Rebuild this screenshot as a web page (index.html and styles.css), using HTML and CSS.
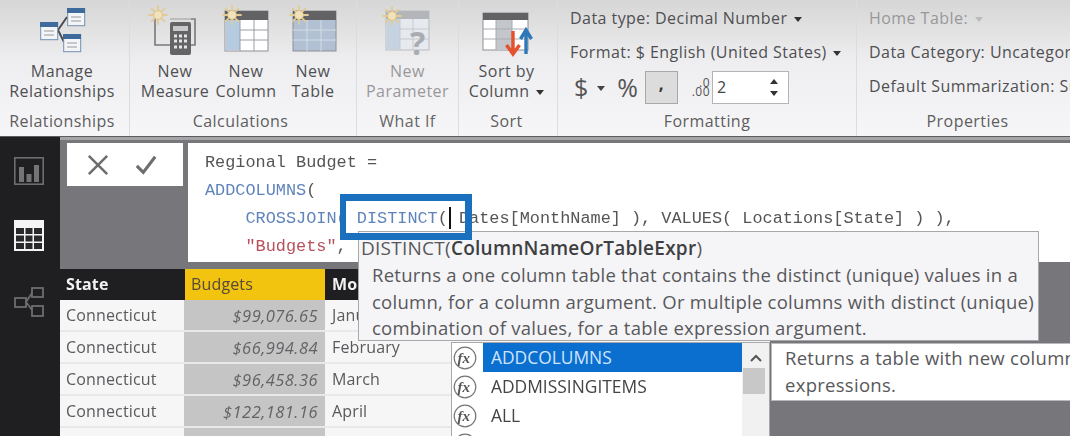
FILE: index.html
```html
<!DOCTYPE html>
<html lang="en">
<head>
<meta charset="utf-8">
<title>Regional Budget</title>
<link rel="stylesheet" href="styles.css">
</head>
<body>
<svg class="defs" width="0" height="0" aria-hidden="true">
  <symbol id="sun" viewBox="-10 -10 20 20">
    <g stroke="#e2cb94" stroke-width="1.8" stroke-linecap="round">
      <path d="M0-9V9M-9 0H9M-6.4-6.4 6.4 6.4M-6.4 6.4 6.4-6.4"/>
    </g>
    <circle r="4.4" fill="#f1e2bb" stroke="#dcc283"/>
  </symbol>
  <symbol id="fx" viewBox="0 0 24 24">
    <circle cx="12" cy="12" r="10.8" fill="#fff" stroke="#777" stroke-width="1.2"/>
    <text x="4.6" y="17" class="fx-text">fx</text>
  </symbol>
</svg>
<div class="app">
  <header class="ribbon">
    <section class="group g-rel">
      <div class="group-body">
        <div class="btn w-full">
          <svg class="ico" viewBox="0 0 50 56">
            <path d="M18 27 27 14M18 27 24 39" stroke="#4c4c50" stroke-width="2" fill="none"/>
            <rect x=".7" y="19.7" width="17" height="17" fill="#f3f5f8" stroke="#6f8fb4"/><rect y="19" width="18" height="5" fill="#3f6a9c"/><path d="M4 28H14M4 32H14" stroke="#999"/>
            <rect x="27.7" y="5.7" width="17" height="17" fill="#f3f5f8" stroke="#6f8fb4"/><rect x="27" y="5" width="18" height="5" fill="#3f6a9c"/><path d="M31 14H41M31 18H41" stroke="#999"/>
            <rect x="23.7" y="31.7" width="17" height="17" fill="#f3f5f8" stroke="#6f8fb4"/><rect x="23" y="31" width="18" height="5" fill="#3f6a9c"/><path d="M27 40H37M27 44H37" stroke="#999"/>
          </svg>
          <span class="btn-label">Manage<br>Relationships</span>
        </div>
      </div>
      <div class="group-label">Relationships</div>
    </section>
    <section class="group g-calc">
      <div class="group-body">
        <div class="btn w-measure">
          <svg class="ico" viewBox="0 0 50 56">
            <path d="M5 16V42H20M41 16H45V42H41" fill="none" stroke="#77787c" stroke-width="1.6"/>
            <path d="M20 16H45" fill="none" stroke="#9a9a9c" stroke-width="1"/>
            <rect x="20" y="19" width="21" height="33" rx="2" fill="#646467"/>
            <rect x="23" y="23" width="15" height="5" fill="#c9c9cb"/>
            <path d="M24 33h3M29 33h3M34 33h3M24 38h3M29 38h3M34 38h3M24 44h3M29 44h3M34 44h3" stroke="#e4e4e4" stroke-width="3"/>
            <use href="#sun" x="-2" y="2" width="20" height="20"/>
          </svg>
          <span class="btn-label">New<br>Measure</span>
        </div>
        <div class="btn w-column">
          <svg class="ico" viewBox="0 0 50 56">
            <rect x="4" y="8" width="43" height="40" fill="#fff" stroke="#8b8f96"/>
            <rect x="4" y="8" width="43" height="9" fill="#626264"/>
            <rect x="5" y="17" width="14" height="30" fill="#b6cbe0"/>
            <path d="M19 17V48M33 17V48M19 27H47M19 37H47" stroke="#9a9ea4"/>
            <use href="#sun" x="1" y="2" width="20" height="20"/>
          </svg>
          <span class="btn-label">New<br>Column</span>
        </div>
        <div class="btn w-table">
          <svg class="ico" viewBox="0 0 50 56">
            <rect x="5" y="8" width="43" height="40" fill="#b1c0d2" stroke="#8b8f96"/>
            <rect x="5" y="8" width="43" height="9" fill="#626264"/>
            <path d="M19 17V48M33 17V48M5 27H48M5 37H48" stroke="#d5dde6"/>
            <use href="#sun" x="1" y="2" width="20" height="20"/>
          </svg>
          <span class="btn-label">New<br>Table</span>
        </div>
      </div>
      <div class="group-label">Calculations</div>
    </section>
    <section class="group g-what">
      <div class="group-body">
        <div class="btn w-full is-off">
          <svg class="ico" viewBox="0 0 50 56">
            <rect x="3" y="8" width="43" height="39" fill="#e6e9ee" stroke="#b9bdc3"/>
            <rect x="3" y="8" width="43" height="8" fill="#b4b5b8"/>
            <rect x="4" y="16" width="13" height="30" fill="#c5d2e0"/>
            <path d="M17 16V47M30 16V47M17 26H46M17 36H46" stroke="#c6c9ce"/>
            <use href="#sun" x="-1" y="3" width="20" height="20"/>
            <text x="27" y="52" class="q-text">?</text>
          </svg>
          <span class="btn-label">New<br>Parameter</span>
        </div>
      </div>
      <div class="group-label">What If</div>
    </section>
    <section class="group g-sort">
      <div class="group-body">
        <div class="btn w-full">
          <svg class="ico" viewBox="0 0 50 56">
            <rect x="1" y="10" width="45" height="37" fill="#fff" stroke="#8b8f96"/>
            <rect x="1" y="10" width="45" height="7" fill="#626264"/>
            <rect x="14" y="17" width="16" height="30" fill="#c3c6ca"/>
            <path d="M14 17V47M30 17V47M1 26H46M1 36H46" stroke="#a9acb1"/>
            <path d="M31 28V48M24.5 42 31 51l6.5-9" fill="none" stroke="#e5512d" stroke-width="3.4"/>
            <path d="M44 51V30M38.5 36 44 27l5.500 9" fill="none" stroke="#2f78b7" stroke-width="3.400"/>
          </svg>
          <span class="btn-label">Sort by<br>Column <i class="caret"></i></span>
        </div>
      </div>
      <div class="group-label">Sort</div>
    </section>
    <section class="group g-format">
      <div class="group-body stack">
        <div class="prop">Data type: Decimal Number <i class="caret"></i></div>
        <div class="prop">Format: $ English (United States) <i class="caret"></i></div>
        <div class="tools">
          <span class="sym">$</span><i class="caret sym-caret"></i>
          <span class="sym pct">%</span>
          <span class="comma">,</span>
          <span class="dec"><span>.0</span><span>.00</span></span>
          <span class="spin"><span>2</span><span class="arrows"><i class="up"></i><i class="down"></i></span></span>
        </div>
      </div>
      <div class="group-label">Formatting</div>
    </section>
    <section class="group g-props">
      <div class="group-body stack">
        <div class="prop is-off">Home Table: <i class="caret pale"></i></div>
        <div class="prop">Data Category: Uncategorized</div>
        <div class="prop">Default Summarization: Sum</div>
      </div>
      <div class="group-label">Properties</div>
    </section>
  </header>

  <div class="main">
    <nav class="rail">
      <svg class="rail-ico" viewBox="0 0 30 28"><rect x=".8" y=".8" width="28.400" height="26.400" fill="none" stroke="#6d6d6f" stroke-width="1.600"/><path d="M5 10h5v15H5zM12.500 17h5v8h-5zM20 8h5v17h-5z" fill="#747476"/></svg>
      <svg class="rail-ico data" viewBox="0 0 30 31"><rect width="30" height="31" fill="#f4f4f4"/><path d="M2 8h8v6H2zM11.500 8h7v6h-7zM20 8h8v6h-8zM2 15.500h8v6H2zM11.500 15.500h7v6h-7zM20 15.500h8v6h-8zM2 23h8v6H2zM11.500 23h7v6h-7zM20 23h8v6h-8z" fill="#29282a"/></svg>
      <svg class="rail-ico rel" viewBox="0 0 30 30"><g fill="none" stroke="#6d6d6f" stroke-width="1.800"><rect x="1" y="11" width="11" height="9"/><rect x="18" y="1" width="11" height="9"/><rect x="18" y="19" width="11" height="10"/><path d="M12 15 18 6M12 15l6 8"/></g></svg>
    </nav>
    <div class="content">
      <div class="formula-row">
        <div class="commit">
          <svg class="x" viewBox="0 0 24 24"><path d="M2 2 22 22M22 2 2 22" stroke="#6e6e70" stroke-width="2.800" fill="none"/></svg>
          <svg class="ok" viewBox="0 0 24 24"><path d="M2 13 9 20 22 3" stroke="#6e6e70" stroke-width="3.400" fill="none"/></svg>
        </div>
        <div class="code">
          <div class="ln">Regional Budget =</div>
          <div class="ln"><span class="fn">ADDCOLUMNS</span>(</div>
          <div class="ln">    <span class="fn">CROSSJOIN</span>( <span class="fn">DISTINCT</span>(<i class="cursor"></i> Dates[MonthName] ), VALUES( Locations[State] ) ),</div>
          <div class="ln">    <span class="str">"Budgets"</span>,</div>
        </div>
      </div>
      <div class="table">
        <div class="row head"><div class="c">State</div><div class="c hl">Budgets</div><div class="c">Month</div></div>
        <div class="row"><div class="c">Connecticut</div><div class="c num">$99,076.65</div><div class="c">January</div></div>
        <div class="row"><div class="c">Connecticut</div><div class="c num">$66,994.84</div><div class="c">February</div></div>
        <div class="row"><div class="c">Connecticut</div><div class="c num">$96,458.36</div><div class="c">March</div></div>
        <div class="row"><div class="c">Connecticut</div><div class="c num">$122,181.16</div><div class="c">April</div></div>
        <div class="row"><div class="c"></div><div class="c num"></div><div class="c"></div></div>
      </div>
    </div>
  </div>

  <aside class="tip">
    <div class="tip-head">DISTINCT(<b>ColumnNameOrTableExpr</b>)</div>
    <div class="tip-body">
      <div>Returns a one column table that contains the distinct (unique) values in a</div>
      <div>column, for a column argument. Or multiple columns with distinct (unique)</div>
      <div>combination of values, for a table expression argument.</div>
    </div>
  </aside>
  <div class="focus-box"></div>
  <div class="ac">
    <ul class="ac-list">
      <li class="sel"><svg class="fx"><use href="#fx"/></svg><span>ADDCOLUMNS</span></li>
      <li><svg class="fx"><use href="#fx"/></svg><span>ADDMISSINGITEMS</span></li>
      <li><svg class="fx"><use href="#fx"/></svg><span>ALL</span></li>
      <li><svg class="fx"><use href="#fx"/></svg><span></span></li>
    </ul>
    <div class="ac-scroll"><svg class="ac-up" viewBox="0 0 12 8"><path d="M1 7 6 2l5 5" fill="none" stroke="#555" stroke-width="2"/></svg><div class="thumb"></div></div>
  </div>
  <div class="ac-desc">Returns a table with new columns specified by the DAX<br>expressions.</div>
</div>
</body>
</html>
```

FILE: styles.css
```css
* { box-sizing: border-box; }
html, body { margin: 0; padding: 0; }
body { width: 1070px; height: 436px; overflow: hidden; background: #77767a; font-family: "Open Sans", "Noto Sans", sans-serif; }
.defs { position: absolute; }
.fx-text { font: italic 700 15px "Liberation Serif", serif; fill: #555; }
.q-text { font: 700 32px "Open Sans", sans-serif; fill: #a9acb1; }

.app { position: relative; width: 1070px; height: 436px; overflow: hidden; display: flex; flex-direction: column; filter: blur(.45px); }

/* ribbon */
.ribbon { flex: none; height: 137px; display: flex; overflow: hidden; background: linear-gradient(#d6d6d6, #eeeef0 45%, #f6f6f8); color: #4f4f52; font-size: 16px; letter-spacing: .45px; border-bottom: 1px solid #5c5c5e; }
.group { flex: none; display: flex; flex-direction: column; height: 136px; border-right: 1px solid #dcdcde; }
.group-body { flex: 1; display: flex; min-height: 0; }
.group-label { height: 25px; padding-bottom: 4px; text-align: center; line-height: 21px; color: #5d5d60; white-space: nowrap; }
.g-rel { width: 130px; padding-right: 5px; }
.g-rel .ico { margin-left: 5px; }
.g-calc { width: 227px; padding-left: 9px; }
.g-calc .group-label { margin-right: 14px; }
.g-what { width: 102px; }
.g-sort { width: 99px; padding-right: 3px; }
.g-format { width: 299px; }
.g-props { width: 213px; border-right: 0; }
.g-props .group-label { padding-left: 8px; }
.btn { display: flex; flex-direction: column; align-items: center; text-align: center; }
.w-full { width: 100%; }
.w-measure { width: 72px; }
.w-column { width: 70px; }
.w-table { width: 64px; }
.ico { width: 50px; height: 56px; margin-top: 3px; flex: none; overflow: visible; }
.btn-label { margin-top: 2px; line-height: 20px; white-space: nowrap; }
.is-off { color: #98989b; }
.g-what .group-label { color: #666; }
.caret { display: inline-block; width: 0; height: 0; margin: 0 0 2px 2px; border: 4px solid transparent; border-top: 5px solid #333; border-bottom: 0; }
.caret.pale { border-top-color: #bbb; }
.stack { flex-direction: column; padding: 1px 0 0 12px; }
.prop { height: 34px; line-height: 34px; white-space: nowrap; }
.tools { height: 36px; display: flex; align-items: center; }
.sym { font-size: 25px; line-height: 34px; color: #555; margin-left: 4px; font-weight: 400; letter-spacing: 0; }
.sym-caret { margin: 2px 0 0 9px; border-top-color: #444; }
.pct { margin-left: 12px; }
.comma { width: 33px; height: 33px; margin-left: 7px; background: #dcdcdc; border: 1px solid #a8a8a8; text-align: center; font-size: 17px; line-height: 24px; font-weight: 700; color: #333; }
.dec { width: 34px; display: flex; flex-direction: column; align-items: flex-end; padding-right: 2px; font-size: 12px; line-height: 9px; color: #555; }
.spin { width: 77px; height: 33px; display: flex; align-items: center; justify-content: space-between; padding: 0 10px 0 4px; background: #fff; border: 1px solid #b4b4b4; font-size: 16px; color: #444; }
.arrows { display: flex; flex-direction: column; gap: 7px; }
.arrows i { display: block; width: 0; height: 0; border: 4px solid transparent; border-bottom: 0; border-top: 5px solid #333; }
.arrows .up { border-top: 0; border-bottom: 5px solid #333; }

/* main */
.main { flex: 1; display: flex; min-height: 0; }
.rail { flex: none; width: 60px; padding: 20px 0 0 14px; background: #1f1e20; display: flex; flex-direction: column; }
.rail-ico { width: 30px; height: 28px; flex: none; }
.rail-ico.data { height: 31px; margin-top: 35px; }
.rail-ico.rel { height: 30px; margin-top: 36px; }
.content { flex: 1; min-width: 0; display: flex; flex-direction: column; border-top: 3px solid #a5a5a7; }
.formula-row { flex: none; height: 129px; padding: 3px 0 0 7px; display: flex; align-items: flex-start; gap: 5px; }
.commit { width: 116px; height: 43px; flex: none; background: #fff; display: flex; align-items: center; padding-left: 20px; }
.x { width: 22px; height: 22px; }
.ok { width: 24px; height: 22px; margin-left: 25px; }
.code { flex: 1; height: 119px; background: #fff; padding: 6px 0 0 17px; font: 16.880px/28px "Liberation Mono", monospace; color: #555; overflow: hidden; }
.ln { height: 28px; white-space: pre; }
.fn { color: #5f83bb; }
.str { color: #b8505c; }
.cursor { display: inline-block; width: 0; height: 22px; border-left: 2px solid #111; vertical-align: -6px; margin-left: 1px; margin-right: -2px; }

.table { flex: none; width: 710px; }
.row { display: grid; grid-template-columns: 124px 141px 1fr; height: 32px; background: #f6f6f7; border-bottom: 2px solid #e8e8ea; font-size: 16px; letter-spacing: .15px; line-height: 31px; color: #5a5a5c; }
.row .c { padding-left: 6px; white-space: nowrap; overflow: hidden; }
.row .c:last-child { padding-left: 7px; }
.row .num { padding: 0 7px 0 0; background: #c5c5c6; text-align: right; font-style: italic; font-size: 16.500px; letter-spacing: .45px; color: #636366; }
.row.head { height: 31px; background: #1f1e20; border-bottom: 0; color: #f2f2f2; font-weight: 700; line-height: 30px; }
.row.head .hl { margin-left: 1px; padding-left: 6px; background: #f3c40f; color: #54493a; font-weight: 400; }

/* overlays */
.tip { position: absolute; left: 358px; top: 231px; width: 681px; height: 110px; padding: 5px 0 0 2px; background: #f5f5f8; border: 1px solid #a8a8aa; color: #58585b; font-size: 19px; letter-spacing: .25px; white-space: nowrap; }
.tip-head { line-height: 22px; }
.tip-head b { font-weight: 600; color: #3f3f42; }
.tip-body { padding: 3px 0 0 11px; font-size: 18.500px; letter-spacing: .25px; line-height: 26.500px; }
.focus-box { position: absolute; left: 340px; top: 194px; width: 132px; height: 46px; border: 7px solid #1a6fbe; border-left-width: 6px; }
.ac { position: absolute; left: 451px; top: 342px; width: 319px; height: 100px; background: #fff; border: 1px solid #a8a8aa; display: flex; }
.ac-list { list-style: none; margin: 0; padding: 0; width: 290px; }
.ac-list li { height: 29px; display: flex; align-items: center; font-size: 17.400px; color: #444; }
.ac-list li span { flex: 1; height: 29px; line-height: 28px; padding-left: 8px; }
.ac-list .sel span { background: #0b6fd0; color: #cfe5fb; }
.fx { width: 24px; height: 24px; margin: 0 6px 0 1px; flex: none; }
.ac-scroll { flex: 1; background: #f1f1f2; padding-top: 11px; }
.ac-up { display: block; width: 12px; height: 8px; margin-left: 8px; }
.thumb { width: 22px; height: 26px; margin: 6px 0 0 1px; background: #c8c8c9; }
.ac-desc { position: absolute; left: 771px; top: 343px; width: 320px; height: 58px; padding: 0 0 0 13px; background: #fff; border: 1px solid #b9b9bb; font-size: 18.500px; letter-spacing: .28px; line-height: 27px; color: #58585b; white-space: nowrap; }
```
